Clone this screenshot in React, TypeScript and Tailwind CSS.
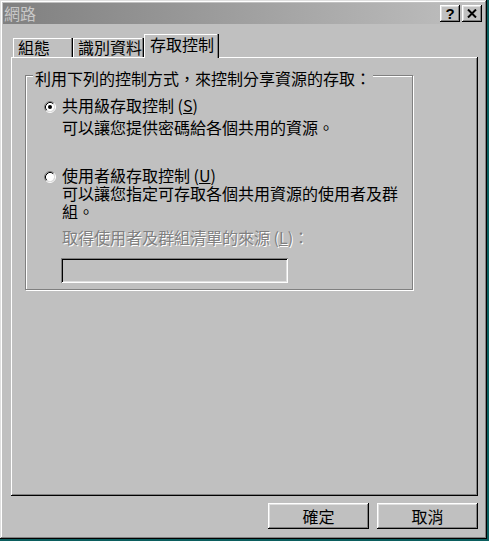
import React from "react";

const font = "font-['Noto_Sans_CJK_TC','Noto_Sans','Liberation_Sans',sans-serif]";

function Radio({ checked }: { checked: boolean }) {
  return (
    <svg width="12" height="12" viewBox="0 0 12 12" className="shrink-0 mt-[5px]">
      <circle cx="6" cy="6" r="4.2" fill="#ffffff" />
      <path d="M2.11 9.89 A5.5 5.5 0 0 1 9.89 2.11" stroke="#808080" strokeWidth="1" fill="none" />
      <path d="M9.89 2.11 A5.5 5.5 0 0 1 2.11 9.89" stroke="#ffffff" strokeWidth="1" fill="none" />
      <path d="M2.82 9.18 A4.5 4.5 0 0 1 9.18 2.82" stroke="#000000" strokeWidth="1" fill="none" />
      <path d="M9.18 2.82 A4.5 4.5 0 0 1 2.82 9.18" stroke="#dfdfdf" strokeWidth="1" fill="none" />
      {checked && <circle cx="6" cy="6" r="2" fill="#000000" />}
    </svg>
  );
}

const btnBevel =
  "shadow-[inset_-1px_-1px_0_#000,inset_1px_1px_0_#fff,inset_-2px_-2px_0_#808080,inset_2px_2px_0_#dfdfdf]";

export default function App() {
  return (
    <div className={`w-[489px] h-[541px] bg-[#0b5f5f] ${font} text-black`}>
      <div className="w-[487px] h-[539px] bg-[#c0c0c0] p-[3px] flex flex-col shadow-[inset_-1px_-1px_0_#000,inset_1px_1px_0_#dfdfdf,inset_-2px_-2px_0_#808080,inset_2px_2px_0_#fff]">
        {/* Title bar */}
        <div className="h-[21px] w-full flex items-start justify-between bg-linear-to-r from-[#808080] to-[#c0c0c0]">
          <div className="pl-[1px] pt-[2px] text-[16px] leading-[16px] text-[#c8c8c8]">網路</div>
          <div className="flex gap-[2px] mt-[2px] mr-[2px]">
            <div className={`w-[20px] h-[17px] bg-[#c0c0c0] flex items-center justify-center ${btnBevel}`}>
              <span className="text-[15px] leading-[15px] font-bold font-['Liberation_Sans',sans-serif] -mt-[1px]">?</span>
            </div>
            <div className={`w-[20px] h-[17px] bg-[#c0c0c0] flex items-center justify-center ${btnBevel}`}>
              <svg width="10" height="9" viewBox="0 0 10 9" className="-mt-[1px]">
                <path d="M1 0.5 L9 8.5 M9 0.5 L1 8.5" stroke="#000" strokeWidth="2" />
              </svg>
            </div>
          </div>
        </div>

        {/* Tabs */}
        <div className="mt-[10px] ml-[8px] h-[23px] flex items-end pl-[2px]">
          <div className="w-[60px] h-[19px] pl-[5px] text-[16px] leading-[16px] pt-[1px] shadow-[inset_-1px_0_0_#000,inset_-2px_0_0_#808080,inset_1px_1px_0_#fff]">
            組態
          </div>
          <div className="w-[71px] h-[19px] pl-[5px] text-[16px] leading-[16px] pt-[1px] shadow-[inset_-1px_0_0_#000,inset_-2px_0_0_#808080,inset_1px_1px_0_#fff]">
            識別資料
          </div>
          <div className="relative z-10 w-[75px] h-[24px] -mb-[1px] pl-[6px] text-[16px] leading-[16px] pt-[2px] bg-[#c0c0c0] shadow-[inset_-1px_0_0_#000,inset_-2px_0_0_#808080,inset_1px_1px_0_#fff]">
            存取控制
          </div>
        </div>

        {/* Panel */}
        <div className="ml-[8px] w-[467px] h-[439px] pt-[18px] pl-[14px] shadow-[inset_-1px_-1px_0_#000,inset_1px_1px_0_#fff,inset_-2px_-2px_0_#808080]">
          <div className="relative w-[388px] h-[215px] border border-[#808080] shadow-[1px_1px_0_#fff,inset_1px_1px_0_#fff] pl-[18px] pt-[20px] flex flex-col">
            <div className="absolute left-[7px] -top-[7px] px-[2px] bg-[#c0c0c0] text-[16px] leading-[18px] whitespace-nowrap">
              利用下列的控制方式，來控制分享資源的存取：
            </div>

            <div className="flex items-start gap-[6px] text-[16px] leading-[18px]">
              <Radio checked />
              <span className="whitespace-nowrap">
                共用級存取控制 (<span className="underline">S</span>)
              </span>
            </div>
            <div className="mt-[4px] pl-[18px] text-[16px] leading-[18px] whitespace-nowrap">
              可以讓您提供密碼給各個共用的資源。
            </div>

            <div className="mt-[30px] flex items-start gap-[6px] text-[16px] leading-[18px]">
              <Radio checked={false} />
              <span className="whitespace-nowrap">
                使用者級存取控制 (<span className="underline">U</span>)
              </span>
            </div>
            <div className="pl-[18px] text-[16px] leading-[18px] whitespace-nowrap">
              可以讓您指定可存取各個共用資源的使用者及群
              <br />
              組。
            </div>

            <div className="mt-[8px] pl-[18px] text-[16px] leading-[18px] whitespace-nowrap text-[#808080] [text-shadow:1px_1px_0_#ffffff]">
              取得使用者及群組清單的來源 (<span className="underline">L</span>)：
            </div>
            <div className="mt-[12px] ml-[17px] w-[227px] h-[25px] bg-[#c0c0c0] shadow-[inset_1px_1px_0_#808080,inset_-1px_-1px_0_#fff,inset_2px_2px_0_#000,inset_-2px_-2px_0_#dfdfdf]" />
          </div>
        </div>

        {/* Buttons */}
        <div className="mt-[7px] ml-[8px] w-[467px] flex justify-end gap-[8px]">
          <button className={`w-[101px] h-[26px] bg-[#c0c0c0] text-[16px] leading-[16px] flex items-center justify-center ${btnBevel}`}>
            確定
          </button>
          <button className={`w-[101px] h-[26px] bg-[#c0c0c0] text-[16px] leading-[16px] flex items-center justify-center ${btnBevel}`}>
            取消
          </button>
        </div>
      </div>
    </div>
  );
}
